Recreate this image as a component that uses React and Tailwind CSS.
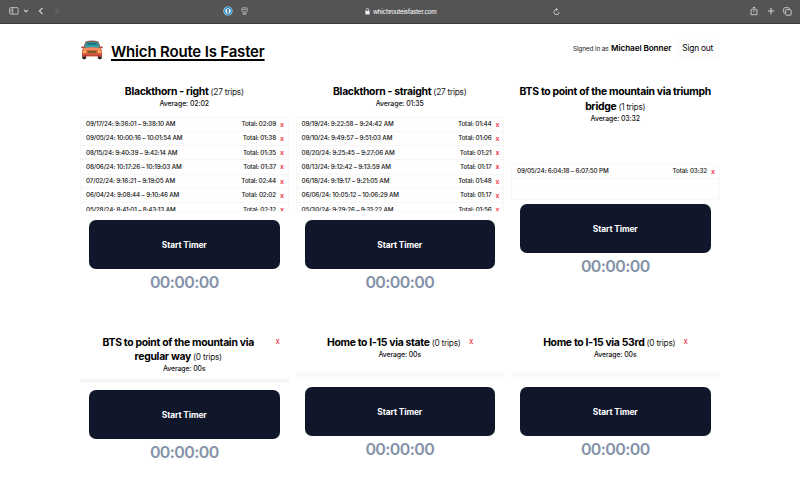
import React from "react";

const LEFT_TRIPS = [
  ["09/17/24: 9:36:01 – 9:38:10 AM", "02:09"],
  ["09/05/24: 10:00:16 – 10:01:54 AM", "01:38"],
  ["08/15/24: 9:40:39 – 9:42:14 AM", "01:35"],
  ["08/06/24: 10:17:26 – 10:19:03 AM", "01:37"],
  ["07/02/24: 9:16:21 – 9:19:05 AM", "02:44"],
  ["06/04/24: 9:08:44 – 9:10:46 AM", "02:02"],
  ["05/28/24: 8:41:01 – 8:43:13 AM", "02:12"],
];

const STRAIGHT_TRIPS = [
  ["09/19/24: 9:22:58 – 9:24:42 AM", "01:44"],
  ["09/10/24: 9:49:57 – 9:51:03 AM", "01:06"],
  ["08/20/24: 9:25:45 – 9:27:06 AM", "01:21"],
  ["08/13/24: 9:12:42 – 9:13:59 AM", "01:17"],
  ["06/18/24: 9:19:17 – 9:21:05 AM", "01:48"],
  ["06/06/24: 10:05:12 – 10:06:29 AM", "01:17"],
  ["05/30/24: 9:29:26 – 9:31:22 AM", "01:56"],
];

function Toolbar() {
  return (
    <div className="flex h-[23.5px] items-center border-b border-[#3c3c3c] bg-[#545454] text-[#d2d2d2]">
      <div className="flex w-[270px] items-center pl-[9px]">
        <svg width="10" height="8" viewBox="0 0 10 8" fill="none" stroke="currentColor" strokeWidth="0.8">
          <rect x="0.6" y="0.6" width="8.6" height="6.6" rx="1.2" />
          <path d="M3.7 0.6v6.6M1.6 2.2h1M1.6 3.5h1M1.6 4.8h1" />
        </svg>
        <svg className="ml-[4px]" width="6" height="4" viewBox="0 0 6 4" fill="none" stroke="currentColor" strokeWidth="1.1">
          <path d="M1 1l2 1.8L5 1" />
        </svg>
        <svg className="ml-[9px]" width="6" height="8" viewBox="0 0 6 8" fill="none" stroke="currentColor" strokeWidth="1.1">
          <path d="M4.5 1L1.3 4l3.2 3" />
        </svg>
        <svg className="ml-[10px] text-[#777]" width="6" height="8" viewBox="0 0 6 8" fill="none" stroke="currentColor" strokeWidth="1">
          <path d="M1.3 1l3.2 3-3.2 3" />
        </svg>
        <svg className="ml-[163px]" width="10" height="10" viewBox="0 0 10 10">
          <circle cx="5" cy="5" r="4.6" fill="#b9dff5" />
          <circle cx="5" cy="5" r="3.3" fill="#e8f4fb" stroke="#1687cc" strokeWidth="1.2" />
          <rect x="4.3" y="3" width="1.4" height="4" rx="0.5" fill="#33536b" />
        </svg>
        <svg className="ml-[8px]" width="7" height="8" viewBox="0 0 7 8" fill="none" stroke="#bdbdbd" strokeWidth="0.8">
          <rect x="0.8" y="0.8" width="5.4" height="4" rx="0.8" />
          <path d="M1.6 2.4h3.8M1 6.2h5M2 7.4h3" />
        </svg>
      </div>
      <div className="ml-[90px] flex w-[210px] items-center pt-px">
        <svg className="ml-[5px]" width="5" height="7" viewBox="0 0 5 7">
          <rect x="0.3" y="3" width="4.4" height="3.6" rx="0.6" fill="#eee" />
          <path d="M1.2 3V1.9a1.3 1.3 0 0 1 2.6 0V3" fill="none" stroke="#eee" strokeWidth="0.8" />
        </svg>
        <span className="ml-[3px] w-[70px] text-[6.2px] leading-none font-medium tracking-[-0.27px] whitespace-nowrap text-[#f0f0f0]">whichrouteisfaster.com</span>
        <svg className="ml-[110px] shrink-0" width="7" height="8" viewBox="0 0 7 8" fill="none" stroke="currentColor" strokeWidth="0.9">
          <path d="M4.5 1.7A2.6 2.6 0 1 0 6.1 4.2M3 0.4l1.7 1.3L3.2 3.1" />
        </svg>
      </div>
      <div className="ml-auto flex items-center gap-[8.5px] pr-[8px]">
        <svg width="8" height="10" viewBox="0 0 8 10" fill="none" stroke="currentColor" strokeWidth="0.9">
          <path d="M2.6 3.7H1v5h6v-5H5.4M4 6.3V1M2.4 2.4L4 0.9l1.6 1.5" />
        </svg>
        <svg width="8" height="8" viewBox="0 0 8 8" fill="none" stroke="currentColor" strokeWidth="1.1">
          <path d="M4 0.8v6.4M0.8 4h6.4" />
        </svg>
        <svg width="9" height="9" viewBox="0 0 9 9" fill="none" stroke="currentColor" strokeWidth="0.9">
          <rect x="2.7" y="2.7" width="5.5" height="5.5" rx="1" />
          <path d="M2.5 6.2H1.7a1 1 0 0 1-1-1V1.7a1 1 0 0 1 1-1h3.6a1 1 0 0 1 1 1v0.8" />
        </svg>
      </div>
    </div>
  );
}

function Car() {
  return (
    <svg className="mt-[-3px] ml-px" width="22" height="20" viewBox="0 0 22 21" preserveAspectRatio="none">
      <rect x="1.2" y="15" width="4" height="5.2" rx="1.2" fill="#2b2523" />
      <rect x="16.8" y="15" width="4" height="5.2" rx="1.2" fill="#2b2523" />
      <path d="M4.6 1.5Q11 -0.4 17.4 1.5L20 8.6H2Z" fill="#8a5e58" />
      <path d="M5.2 2.8Q11 1.3 16.8 2.8L18.6 8.4H3.4Z" fill="#2f9fa8" />
      <path d="M6.4 3.5Q11 2.5 15.6 3.5L16.2 5H5.8Z" fill="#1c6f7c" />
      <rect x="0.3" y="6.7" width="2.8" height="2" rx="0.9" fill="#a74a3a" />
      <rect x="18.9" y="6.7" width="2.8" height="2" rx="0.9" fill="#a74a3a" />
      <path d="M3 8.2Q11 7.2 19 8.2Q21.4 10 21 13V17.2H1V13Q0.6 10 3 8.2Z" fill="#e4603f" />
      <path d="M3.3 8.4Q11 7.5 18.7 8.4L19.5 10.4H2.5Z" fill="#f58d62" />
      <rect x="6.7" y="11.2" width="8.6" height="2.8" rx="0.8" fill="#7a5a26" />
      <rect x="2" y="11" width="3.5" height="2.4" rx="1.1" fill="#ffc56a" />
      <rect x="16.5" y="11" width="3.5" height="2.4" rx="1.1" fill="#ffc56a" />
      <path d="M1 15.2h20v1.6H1z" fill="#bf4336" />
    </svg>
  );
}

function Trips({ trips, height }) {
  return (
    <div className={`${height} overflow-hidden border border-[#f8f8f8] bg-[#fefefe]`}>
      {trips.map(([range, total]) => (
        <div key={range} className="flex h-[14.3px] items-center border-b border-[#f6f6f6] pr-[3.5px] pl-[5px] text-[6.3px] leading-none font-medium tracking-[-0.14px] text-[#151515]">
          <span>{range}</span>
          <span className="ml-auto">Total: {total}</span>
          <span className="ml-[4px] w-[4px] text-center text-[7.2px] text-[#f0142f]">x</span>
        </div>
      ))}
    </div>
  );
}

function RouteCard({ lines, count, average, removable, children, removePosition = "" }) {
  return (
    <section className="flex flex-col">
      <div className="relative pt-px text-center">
        <h2 className={`text-[10.4px] leading-[14.5px] font-bold tracking-[-0.3px] whitespace-nowrap text-black ${removable ? "pr-[12px]" : ""}`}>
          {lines.map((line, i) => (
            <span key={line} className="block">
              {line}
              {i === lines.length - 1 && <span className="text-[8.3px] font-normal tracking-[-0.25px] text-[#222]"> ({count} trips)</span>}
            </span>
          ))}
        </h2>
        <p className="mt-[-0.5px] text-[6.9px] leading-[9.5px] font-medium tracking-[-0.08px] text-[#111]">Average: {average}</p>
        {removable && <span className={`absolute top-px text-[8px] leading-[10px] text-[#f0142f] ${removePosition}`}>x</span>}
      </div>
      {children}
      <button className="mx-[9px] h-[49px] rounded-[7px] bg-[#10172b] pt-px text-[8.4px] font-bold tracking-[-0.1px] text-white">Start Timer</button>
      <div className="mt-[3px] text-center text-[16px] leading-[20px] font-semibold tracking-[-0.6px] text-[#8492a8]">00:00:00</div>
    </section>
  );
}

export default function App() {
  return (
    <div className="h-[500px] w-[800px] overflow-hidden bg-white font-['Inter','Liberation_Sans',sans-serif] text-black">
      <Toolbar />
      <div className="px-[80px]">
        <header className="flex h-[55px] items-center">
          <Car />
          <h1 className="ml-[8px] text-[15px] leading-none font-semibold tracking-[-0.18px] whitespace-nowrap underline decoration-[1.5px] underline-offset-2">Which Route Is Faster</h1>
          <p className="mt-[-5px] ml-auto flex items-baseline gap-[2.5px] whitespace-nowrap">
            <span className="text-[6.6px] tracking-[-0.2px] text-[#222]">Signed in as</span>
            <span className="text-[8.2px] font-semibold tracking-[-0.1px]">Michael Bonner</span>
          </p>
          <button className="mt-[-5px] ml-[4px] h-[20px] rounded bg-[#fcfcfc] px-[7px] text-[8.3px] tracking-[-0.2px]">Sign out</button>
        </header>
        <main className="mt-[5.5px] grid grid-cols-[208.5px_208.5px_208.5px] gap-x-[7px]">
          <div className="h-[250.5px]">
            <RouteCard lines={["Blackthorn - right"]} count={27} average="02:02">
              <div className="mt-[8px] mb-[8.5px]"><Trips trips={LEFT_TRIPS} height="h-[95px]" /></div>
            </RouteCard>
          </div>
          <div>
            <RouteCard lines={["Blackthorn - straight"]} count={27} average="01:35">
              <div className="mt-[8px] mb-[8.5px]"><Trips trips={STRAIGHT_TRIPS} height="h-[95px]" /></div>
            </RouteCard>
          </div>
          <div>
            <RouteCard lines={["BTS to point of the mountain via triumph", "bridge"]} count={1} average="03:32">
              <div className="mt-[40.5px] mb-[4.5px]"><Trips trips={[["09/05/24: 6:04:18 – 6:07:50 PM", "03:32"]]} height="h-[36px]" /></div>
            </RouteCard>
          </div>
          <RouteCard lines={["BTS to point of the mountain via", "regular way"]} count={0} average="00s" removable removePosition="left-[195.5px]">
            <div className="mt-[5.5px] mb-[7.5px] h-[3.5px] bg-[#f6f6f6]" />
          </RouteCard>
          <RouteCard lines={["Home to I-15 via state"]} count={0} average="00s" removable removePosition="left-[173.5px]">
            <div className="mt-[13px] mb-[8.5px] h-[6.5px] bg-[#fafafa]" />
          </RouteCard>
          <RouteCard lines={["Home to I-15 via 53rd"]} count={0} average="00s" removable removePosition="left-[172.5px]">
            <div className="mt-[13px] mb-[8.5px] h-[6.5px] bg-[#fafafa]" />
          </RouteCard>
        </main>
      </div>
    </div>
  );
}
